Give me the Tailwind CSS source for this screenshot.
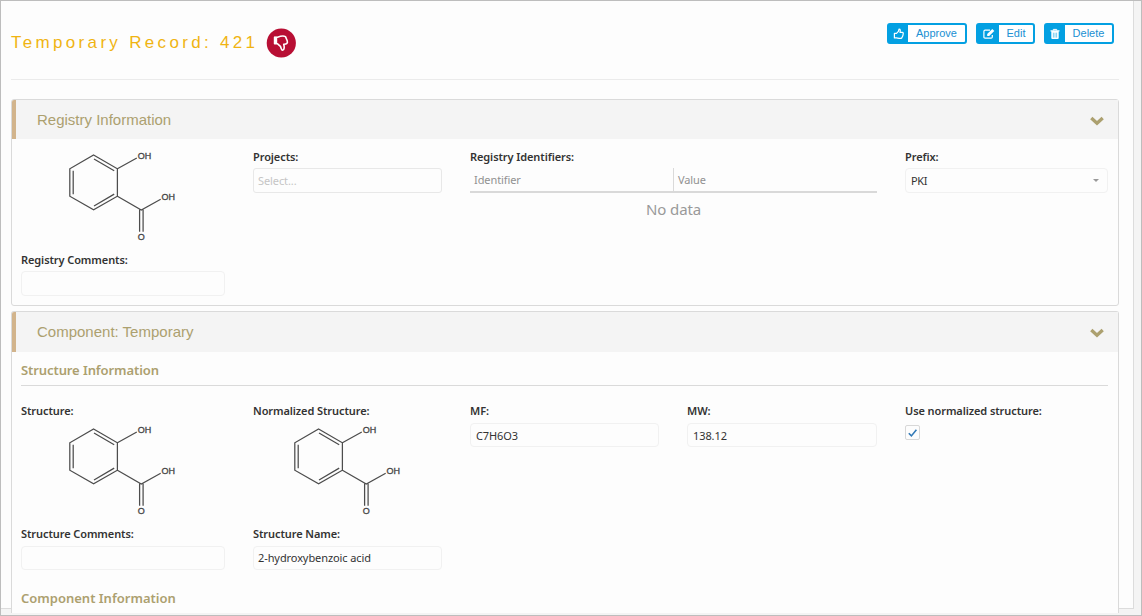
<!DOCTYPE html>
<html lang="en">
<head>
<meta charset="utf-8">
<title>Temporary Record: 421</title>
<script src="https://cdn.jsdelivr.net/npm/@tailwindcss/browser@4"></script>
</head>
<body class="h-[616px] w-[1142px] overflow-hidden border border-[#bdbdbd] bg-[#f4f4f4] font-['Noto_Sans',sans-serif] text-[11px] tracking-[-0.09px] text-[#333]">
<svg class="hidden">
  <symbol id="mol" viewBox="64 148 116 96">
    <g fill="none" stroke="#4d4d4d" stroke-width="1.25">
      <path d="M93.6 155 117.4 168.8V196.2L93.6 209.8 69.8 196.2V168.8ZM117.4 168.8 136.8 158M117.4 196.2 141.3 210 160.7 199.3M94 159 114.2 170.8M94 206 114.2 194.1M73.2 170.8V194.2M139.6 209.8V231.8M143.1 209.8V231.8"/>
    </g>
    <g fill="#444" stroke="#444" stroke-width=".3" font-family="Liberation Sans, sans-serif" font-size="9" letter-spacing="0">
      <text x="137.8" y="159">OH</text><text x="161.6" y="199.7">OH</text><text x="137.8" y="240.2">O</text>
    </g>
  </symbol>
  <symbol id="chev" viewBox="0 0 14 10"><path d="M1.3 2 7 7.3 12.7 2" fill="none" stroke="#aca06f" stroke-width="3.3"/></symbol>
</svg>
<div class="h-[608px] w-[1133px] border-r border-b border-[#dcdcdc] bg-[#fdfdfd] pl-[10px]">
  <header class="flex h-[79px] w-[1108px] items-start justify-between border-b border-[#ebebeb]">
    <div class="flex items-center pt-[27px]">
      <h1 class="w-[255px] font-['Liberation_Sans',sans-serif] text-[17px] leading-7 tracking-[3.32px] whitespace-nowrap text-[#f0b412]">Temporary Record: 421</h1>
      <svg class="size-[30px]" viewBox="0 0 30 30"><circle cx="15.3" cy="15" r="14.6" fill="#b80f34"/><path d="M8.6 9.2H11.5C14.3 8.2 17.5 7.6 19.5 8.6L21.2 12.8C22 15 20.8 16.3 17.7 16.2C18.4 18.3 18.6 22 16.6 22.3C15.2 22.3 15.3 20 14.4 18.4L11.6 15.8H8.6Z" fill="none" stroke="#fff" stroke-width="1.6" stroke-linejoin="round"/><path d="M8 8.8H11.2V16H8Z" fill="#fff"/></svg>
    </div>
    <div class="flex gap-[9px] pt-[22px] pr-[5px] font-['Liberation_Sans',sans-serif] text-[11px] tracking-normal text-[#2090d3]">
      <div class="flex h-[21px] w-[80px] rounded-[3px] border-2 border-[#03a0e2] bg-white">
        <span class="flex w-[19px] items-center justify-center bg-[#03a0e2]"><svg class="size-[12px]" viewBox="0 0 12 12" fill="none" stroke="#fff" stroke-width="1.2" stroke-linejoin="round"><path d="M1.4 5.3H3.5L5.4 3.4 6 1.1C7.4 1 7.5 2.2 7 4.4H9.3C10.5 4.5 10.4 5.6 10 6.1C10.4 6.8 10.1 7.4 9.7 7.7C9.8 8.4 9.5 8.9 9.1 9.1C9 10 8.4 10.4 7.6 10.4C5.5 10.4 4.6 10 3.5 9.9H1.4Z"/></svg></span>
        <span class="flex-1 text-center leading-[17px]">Approve</span>
      </div>
      <div class="flex h-[21px] w-[59px] rounded-[3px] border-2 border-[#03a0e2] bg-white">
        <span class="flex w-[21px] items-center justify-center bg-[#03a0e2]"><svg class="size-[12px]" viewBox="0 0 12 12"><path d="M9.3 7V9Q9.3 10.2 8.1 10.2H2.1Q.9 10.2.9 9V3.4Q.9 2.2 2.1 2.2H7" fill="none" stroke="#fff" stroke-width="1.2"/><path d="M4.2 6 9.3.9 11.3 2.9 6.2 8H4.2Z" fill="#fff"/></svg></span>
        <span class="flex-1 text-center leading-[17px]">Edit</span>
      </div>
      <div class="flex h-[21px] w-[70px] rounded-[3px] border-2 border-[#03a0e2] bg-white">
        <span class="flex w-[19px] items-center justify-center bg-[#03a0e2]"><svg class="mr-px size-[12px]" viewBox="0 0 12 12"><path d="M4.3 2.5V1.4H7.7V2.5" fill="none" stroke="#fff"/><path d="M1.5 2.3H10.5V3.5H1.5ZM2.3 3.5H9.7V10Q9.7 11 8.7 11H3.3Q2.3 11 2.3 10Z" fill="#fff"/><path d="M4.4 4.7V9.6M6 4.7V9.6M7.6 4.7V9.6" stroke="#03a0e2" stroke-width=".5"/></svg></span>
        <span class="flex-1 text-center leading-[17px]">Delete</span>
      </div>
    </div>
  </header>

  <section class="mt-[19px] h-[207px] w-[1108px] rounded-[3px] border border-[#dadada]">
    <div class="flex h-[39px] items-center justify-between rounded-tl-[2px] border-l-4 border-[#d2b48c] bg-[#f4f4f4] pr-[14px] pl-[21px]">
      <h2 class="pt-[2px] font-['Liberation_Sans',sans-serif] text-[15px] tracking-normal text-[#aca06f]">Registry Information</h2>
      <svg class="mt-[3px] h-[10px] w-[14px]"><use href="#chev"/></svg>
    </div>
    <div class="grid grid-cols-[232px_217px_217px_218px_203px] pt-2 pl-[9px]">
      <div>
        <svg class="mt-px ml-[43px] h-[96px] w-[116px]"><use href="#mol"/></svg>
        <div class="mt-[6px] leading-5 font-semibold">Registry Comments:</div>
        <div class="mt-px h-[25px] w-[204px] rounded-[4px] border border-[#f1f1f1]"></div>
      </div>
      <div>
        <div class="leading-5 font-semibold">Projects:</div>
        <div class="mt-px h-[25px] w-[189px] rounded-[3px] border border-[#e8e8e8] pl-1 leading-[24px] text-[#c5c5c5]">Select...</div>
      </div>
      <div class="col-span-2">
        <div class="leading-5 font-semibold">Registry Identifiers:</div>
        <div class="mt-px flex h-[25px] w-[407px] border-b-2 border-[#d9d9d9] leading-[24px] text-[#919191]">
          <div class="w-[204px] border-r border-[#dadada] pl-1">Identifier</div>
          <div class="pl-1">Value</div>
        </div>
        <div class="mt-1 w-[407px] text-center text-[15px] leading-6 text-[#999]">No data</div>
      </div>
      <div>
        <div class="leading-5 font-semibold">Prefix:</div>
        <div class="mt-px flex h-[25px] w-[203px] items-center justify-between rounded-[4px] border border-[#f1f1f1] pr-[8px] pl-[5px]"><span class="pt-px tracking-[-0.4px]">PKI</span><svg class="h-[3px] w-[6px]" viewBox="0 0 6 3"><path d="M0 0H6L3 3Z" fill="#999"/></svg></div>
      </div>
    </div>
  </section>

  <section class="mt-[5px] h-[302px] w-[1108px] rounded-t-[3px] border border-b-0 border-[#dadada] bg-[#fdfdfd]">
    <div class="flex h-[40px] items-center justify-between rounded-tl-[2px] border-l-4 border-[#d2b48c] bg-[#f4f4f4] pr-[14px] pl-[21px]">
      <h2 class="font-['Liberation_Sans',sans-serif] text-[15px] tracking-normal text-[#aca06f]">Component: Temporary</h2>
      <svg class="mt-px h-[10px] w-[14px]"><use href="#chev"/></svg>
    </div>
    <h3 class="mt-2 ml-[9px] h-[26px] w-[1087px] border-b border-[#dadada] text-[13px] leading-5 font-semibold text-[#aca06f]">Structure Information</h3>
    <div class="grid grid-cols-[232px_217px_217px_218px_203px] pt-[15px] pl-[9px]">
      <div>
        <div class="leading-5 font-semibold">Structure:</div>
        <svg class="mt-px ml-[43px] h-[96px] w-[116px]"><use href="#mol"/></svg>
        <div class="mt-[6px] leading-5 font-semibold">Structure Comments:</div>
        <div class="mt-[2px] h-[24px] w-[204px] rounded-[4px] border border-[#f1f1f1]"></div>
      </div>
      <div>
        <div class="leading-5 font-semibold">Normalized Structure:</div>
        <svg class="mt-px ml-[36px] h-[96px] w-[116px]"><use href="#mol"/></svg>
        <div class="mt-[6px] leading-5 font-semibold">Structure Name:</div>
        <div class="mt-[2px] h-[24px] w-[189px] rounded-[4px] border border-[#f1f1f1] pl-1 leading-[22px]">2-hydroxybenzoic acid</div>
      </div>
      <div>
        <div class="leading-5 font-semibold">MF:</div>
        <div class="mt-[2px] h-[24px] w-[189px] rounded-[4px] border border-[#f1f1f1] pl-[5px] leading-[24px]">C7H6O3</div>
      </div>
      <div>
        <div class="leading-5 font-semibold">MW:</div>
        <div class="mt-[2px] h-[24px] w-[190px] rounded-[4px] border border-[#f1f1f1] pl-[5px] leading-[24px]">138.12</div>
      </div>
      <div>
        <div class="leading-5 font-semibold">Use normalized structure:</div>
        <div class="mt-1 flex size-[15px] items-center justify-center rounded-[2px] border border-[#d8d8d8]"><svg class="size-[10px]" viewBox="0 0 10 10"><path d="M.8 5.2 3.4 7.9 8.4 1.7" fill="none" stroke="#337ab7" stroke-width="1.6"/></svg></div>
      </div>
    </div>
    <h3 class="mt-[18px] ml-[9px] text-[13px] leading-5 font-semibold tracking-normal text-[#aca06f]">Component Information</h3>
  </section>
</div>
</body>
</html>
